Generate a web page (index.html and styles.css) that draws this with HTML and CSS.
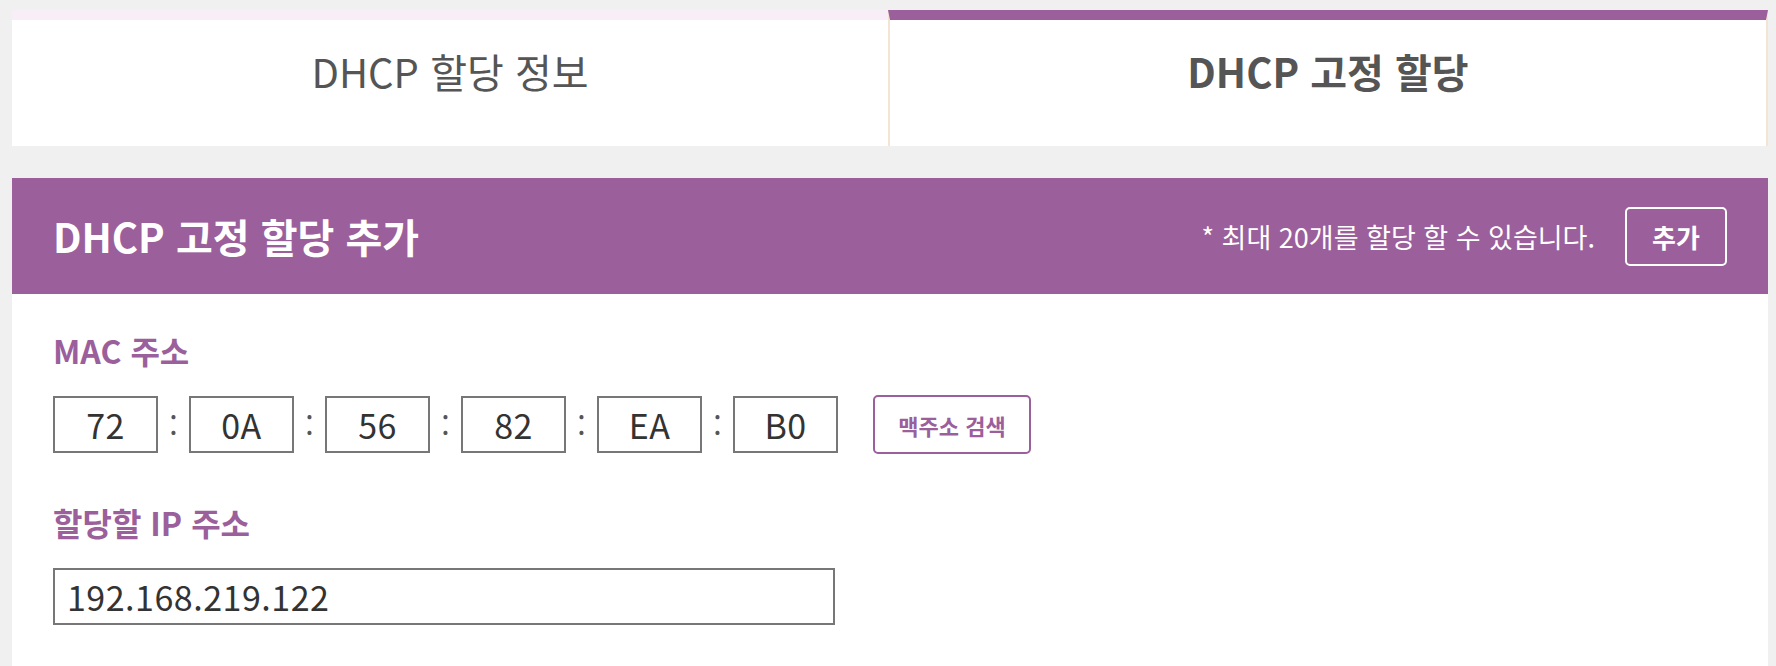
FILE: index.html
```html
<!DOCTYPE html>
<html lang="ko">
<head>
<meta charset="utf-8">
<title>DHCP 고정 할당</title>
<link rel="stylesheet" href="styles.css">
</head>
<body>
<div class="page">
  <div class="tabs">
    <div class="tab">DHCP 할당 정보</div>
    <div class="tab active">DHCP 고정 할당</div>
  </div>
  <section class="panel">
    <div class="panel-head">
      <h2 class="panel-title">DHCP 고정 할당 추가</h2>
      <div class="head-right">
        <span class="notice">* 최대 20개를 할당 할 수 있습니다.</span>
        <button class="add-btn">추가</button>
      </div>
    </div>
    <div class="panel-body">
      <div class="field-label">MAC 주소</div>
      <div class="mac-row">
        <div class="mac-box">72</div><span class="sep">:</span>
        <div class="mac-box">0A</div><span class="sep">:</span>
        <div class="mac-box">56</div><span class="sep">:</span>
        <div class="mac-box">82</div><span class="sep">:</span>
        <div class="mac-box">EA</div><span class="sep">:</span>
        <div class="mac-box">B0</div>
        <button class="search-btn">맥주소 검색</button>
      </div>
      <div class="field-label ip-label">할당할 IP 주소</div>
      <div class="ip-box">192.168.219.122</div>
    </div>
  </section>
</div>
</body>
</html>
```

FILE: styles.css
```css
html, body {
  margin: 0;
  padding: 0;
  background: #f0f0f0;
  font-family: "Noto Sans CJK KR", "Noto Sans", sans-serif;
}

.page {
  padding: 10px 8px 0 12px;
}

.tabs {
  display: flex;
  height: 136px;
}

.tab {
  flex: 1 1 0;
  box-sizing: border-box;
  border-top: 10px solid #f7eef7;
  background: #fff;
  display: flex;
  align-items: center;
  justify-content: center;
  padding-bottom: 24px;
  font-size: 40px;
  color: #555;
}

.tab.active {
  border-top-color: #9b5f9b;
  border-left: 2px solid #f3e4d3;
  border-right: 2px solid #f3e4d3;
  font-weight: 700;
}

.panel {
  margin-top: 32px;
  background: #fff;
  min-height: 488px;
}

.panel-head {
  height: 116px;
  background: #9b5f9b;
  display: flex;
  align-items: center;
  justify-content: space-between;
  padding: 0 41px 0 41px;
}

.panel-title {
  margin: 0;
  font-size: 40px;
  font-weight: 700;
  color: #fff;
}

.head-right {
  display: flex;
  align-items: center;
  gap: 30px;
}

.notice {
  font-size: 27px;
  color: #fff;
}

.add-btn {
  width: 102px;
  height: 59px;
  box-sizing: border-box;
  border: 2px solid #fff;
  border-radius: 5px;
  background: transparent;
  color: #fff;
  font-family: inherit;
  font-size: 26px;
  font-weight: 700;
  padding: 0;
}

.panel-body {
  padding: 37px 41px 0 41px;
}

.field-label {
  font-size: 32px;
  line-height: 38px;
  font-weight: 700;
  color: #9b5f9b;
}

.mac-row {
  display: flex;
  align-items: center;
  margin-top: 26px;
}

.mac-box {
  width: 105px;
  height: 57px;
  box-sizing: border-box;
  border: 2px solid #777;
  display: flex;
  align-items: center;
  justify-content: center;
  font-size: 34px;
  letter-spacing: 0.5px;
  color: #333;
}

.sep {
  width: 31px;
  text-align: center;
  font-size: 30px;
  color: #555;
  padding-bottom: 2px;
}

.search-btn {
  margin-left: 35px;
  width: 158px;
  height: 59px;
  box-sizing: border-box;
  border: 2px solid #9b5f9b;
  border-radius: 5px;
  background: #fff;
  color: #9b5f9b;
  font-family: inherit;
  font-size: 22px;
  font-weight: 700;
  padding: 0;
}

.ip-label {
  margin-top: 49px;
}

.ip-box {
  margin-top: 27px;
  width: 782px;
  height: 57px;
  box-sizing: border-box;
  border: 2px solid #777;
  display: flex;
  align-items: center;
  padding-left: 12px;
  font-size: 34px;
  letter-spacing: 0.5px;
  color: #333;
}
```
